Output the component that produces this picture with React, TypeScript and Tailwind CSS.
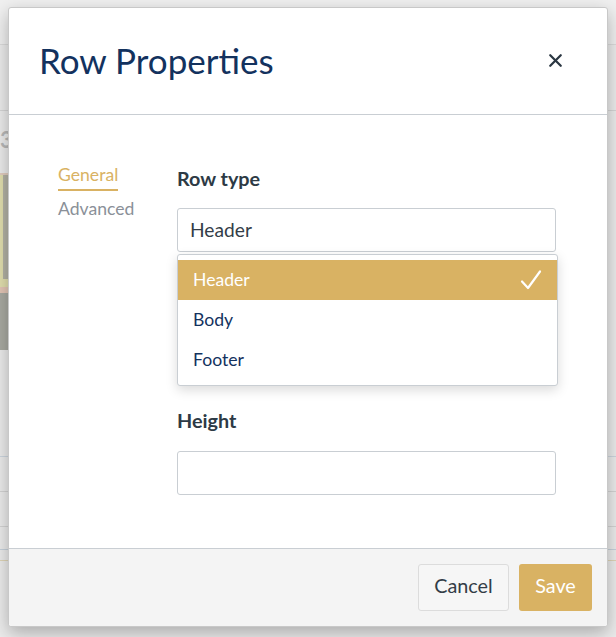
import { X } from 'lucide-react';

const options = ['Header', 'Body', 'Footer'];

const Backdrop = () => (
  <div className="flex flex-col w-full h-full bg-[#ececec]">
    <div className="h-[44px] bg-[#f0f0f0]" />
    <div className="h-px bg-[#dcdcdc]" />
    <div className="h-[65px]" />
    <div className="h-px bg-[#d6d6d6]" />
    <div className="h-[20px]" />
    <div className="h-[18px] text-[22px] leading-[18px] font-bold text-[#b9b9b9]">3</div>
    <div className="h-[24px]" />
    <div className="h-[2px] flex">
      <div className="w-[40px] bg-[#e2cdbf]" />
    </div>
    <div className="h-[104px] flex">
      <div className="w-[3px] bg-[#e2dfae]" />
      <div className="w-[5px] bg-[#b3b2a5]" />
    </div>
    <div className="h-[8px] flex">
      <div className="w-[40px] bg-[#e2dfae]" />
    </div>
    <div className="h-[6px] flex">
      <div className="w-[40px] bg-[#e4c6b6]" />
    </div>
    <div className="h-[57px] flex">
      <div className="w-[40px] bg-[#a9aaa2]" />
    </div>
    <div className="h-[106px]" />
    <div className="h-px bg-[#cdd6df]" />
    <div className="h-[34px]" />
    <div className="h-px bg-[#d4d4d4]" />
    <div className="h-[34px]" />
    <div className="h-px bg-[#d4d4d4]" />
    <div className="h-[22px]" />
    <div className="h-px bg-[#c7d2dc]" />
    <div className="h-[10px]" />
    <div className="h-px bg-[#e0d6b8]" />
  </div>
);

const Check = () => (
  <svg width="22" height="22" viewBox="0 0 22 22" fill="none" className="block">
    <path d="M2 12.5 L8 19 L20 2.5" stroke="white" strokeWidth="2.2" strokeLinecap="round" strokeLinejoin="round" />
  </svg>
);

export default function App() {
  return (
    <div className="relative w-[616px] h-[637px] overflow-hidden font-['Lato','Open_Sans',sans-serif]">
      <Backdrop />
      <div className="absolute left-[8px] top-[7px] w-[600px] h-[620px] flex flex-col bg-white rounded-[3px] border border-[#c8c8c8] shadow-[0_6px_18px_rgba(0,0,0,0.28)]">
        <div className="h-[107px] shrink-0 flex items-center justify-between pl-[30px] pr-[41px] pb-[2px] border-b border-[#c9ced3]">
          <h1 className="text-[35px] leading-[42px] text-[#13325e]">Row Properties</h1>
          <X size={21} strokeWidth={2.6} className="text-[#2b3742]" />
        </div>

        <div className="flex-1 flex pt-[47px] pl-[49px]">
          <div className="w-[119px] shrink-0 flex flex-col items-start pt-[2px]">
            <div className="text-[17.6px] leading-[22px] text-[#d9b263] pb-[3px] border-b-2 border-[#d9b263]">General</div>
            <div className="mt-[7px] text-[17.6px] leading-[22px] text-[#8a9098]">Advanced</div>
          </div>

          <div className="w-[379px] flex flex-col">
            <div className="pt-[4px] text-[19.8px] leading-[24px] font-bold text-[#2d3a45]">Row type</div>
            <div className="relative mt-[18px]">
              <div className="h-[44px] flex items-center px-[12px] border border-[#c9ced3] rounded-[3px] text-[19.2px] text-[#333d47]">
                Header
              </div>
              <div className="absolute left-0 top-[46px] w-[381px] z-10 bg-white border border-[#c9ced3] rounded-[3px] pt-[5px] pb-[6px] shadow-[0_4px_12px_rgba(0,0,0,0.15)]">
                {options.map((o, i) => (
                  <div
                    key={o}
                    className={`h-[39.5px] flex items-center justify-between pl-[15px] pr-[15px] text-[17.6px] ${
                      i === 0 ? 'bg-[#d9b263] text-white' : 'text-[#13325e] pt-[2px]'
                    }`}
                  >
                    <span>{o}</span>
                    {i === 0 && <Check />}
                  </div>
                ))}
              </div>
            </div>

            <div className="mt-[156px] text-[19.8px] leading-[24px] font-bold text-[#2d3a45]">Height</div>
            <div className="mt-[19px] h-[44px] border border-[#c9ced3] rounded-[3px]" />
          </div>
        </div>

        <div className="shrink-0 flex justify-end gap-[10px] px-[15px] py-[15px] bg-[#f4f4f4] border-t border-[#c9ced3] rounded-b-[3px]">
          <button className="h-[47px] w-[91px] pb-[3px] rounded-[3px] border border-[#dcdcdc] bg-[#f6f6f6] text-[19.8px] text-[#333d47]">
            Cancel
          </button>
          <button className="h-[47px] w-[73px] pb-[3px] rounded-[3px] bg-[#d9b263] text-[19.8px] text-white">Save</button>
        </div>
      </div>
    </div>
  );
}
